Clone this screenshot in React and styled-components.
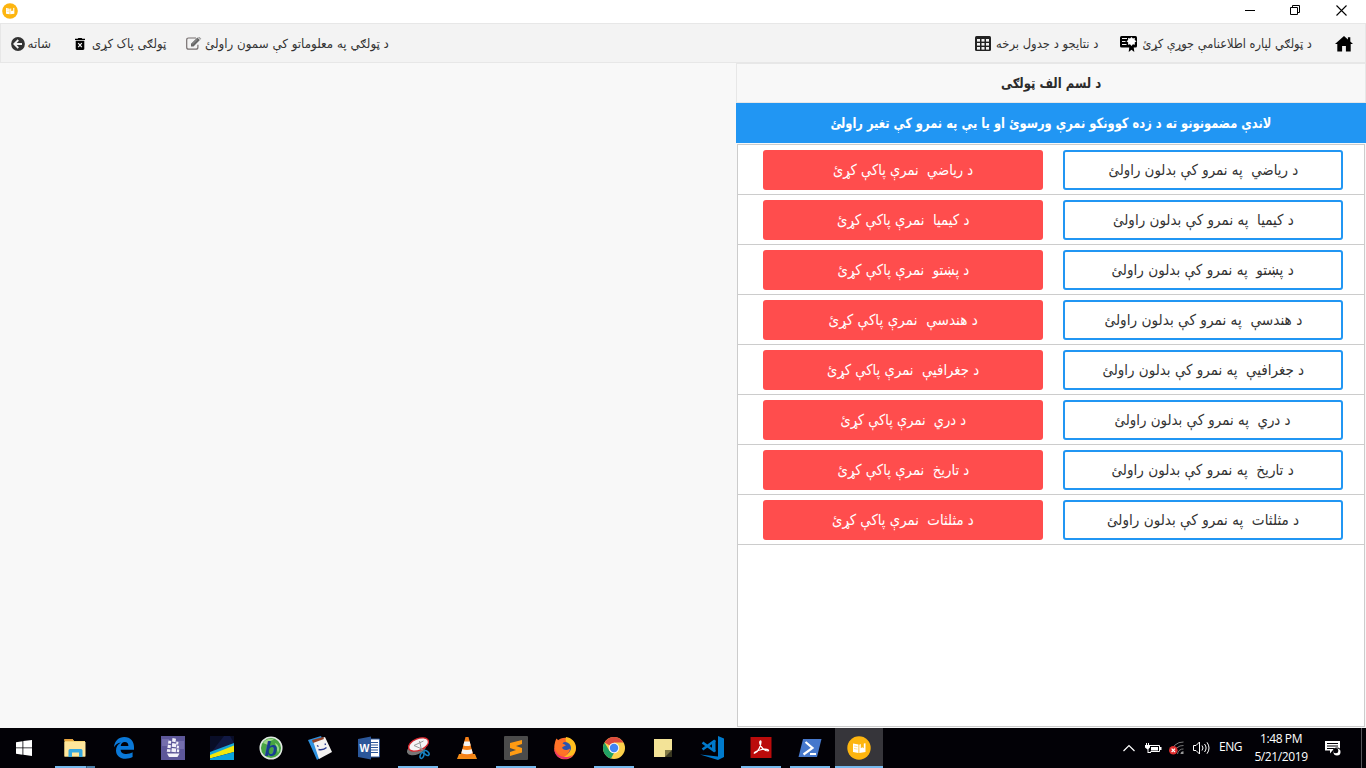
import React from "react";
import styled, { createGlobalStyle, css } from "styled-components";

const GlobalStyle = createGlobalStyle`
  * { box-sizing: border-box; }
  body { margin: 0; background: #f8f8f8; overflow: hidden; }
  button { font: inherit; color: inherit; margin: 0; padding: 0; border: 0; background: none; }
  svg { display: block; flex: none; }
`;

const Window = styled.div`
  width: 1366px;
  height: 768px;
  display: flex;
  flex-direction: column;
  font-family: "DejaVu Sans", "Noto Sans", sans-serif;
  background: #f8f8f8;
`;

const TitleBar = styled.header`
  height: 23px;
  flex: none;
  display: flex;
  align-items: flex-start;
  justify-content: space-between;
  background: #fff;
  padding: 3px 19px 0 2px;
`;

const WindowControls = styled.div`
  display: flex;
  gap: 35px;
  padding-top: 2px;
`;

const Toolbar = styled.nav`
  height: 40px;
  flex: none;
  display: flex;
  justify-content: space-between;
  align-items: center;
  background: #f3f3f3;
  border: 1px solid #e7e7e7;
  padding: 1px 12px 0 10px;
`;

const ToolGroup = styled.div`
  display: flex;
  align-items: center;
`;

const Tool = styled.button`
  display: flex;
  align-items: center;
  gap: ${(p) => p.$gap}px;
  margin-right: ${(p) => p.$after || 0}px;
  color: #333;
`;

const TextBox = styled.span`
  display: flex;
  justify-content: center;
  width: ${(p) => p.$width}px;
  white-space: pre;
  direction: rtl;
  font-size: ${(p) => p.$size || 12.5}px;
  font-weight: ${(p) => (p.$bold ? 700 : 400)};
  line-height: 20px;
`;

const TextRun = styled.span`
  flex: none;
`;

function Text({ width, children, ...rest }) {
  const ref = React.useRef(null);
  React.useLayoutEffect(() => {
    const el = ref.current;
    el.style.transform = `scaleX(${width / el.offsetWidth})`;
  }, [width, children]);
  return (
    <TextBox $width={width} {...rest}>
      <TextRun ref={ref}>{children}</TextRun>
    </TextBox>
  );
}

const Content = styled.main`
  height: 665px;
  flex: none;
  display: flex;
  justify-content: flex-end;
`;

const Panel = styled.section`
  width: 630px;
  display: flex;
  flex-direction: column;
`;

const PanelTitle = styled.h1`
  margin: 0;
  height: 40px;
  flex: none;
  display: flex;
  align-items: center;
  justify-content: center;
  color: #2b2b2b;
  background: #f8f8f8;
  border: 1px solid #e7e7e7;
`;

const PanelNotice = styled.div`
  height: 40px;
  flex: none;
  display: flex;
  align-items: center;
  justify-content: center;
  color: #fff;
  background: #2196f3;
`;

const SubjectList = styled.div`
  flex: 1;
  margin: 1px;
  background: #fff;
  border: 1px solid #ccc;
`;

const SubjectRow = styled.div`
  height: 50px;
  display: flex;
  gap: 20px;
  padding: 5px 21px 0 25px;
  border-bottom: 1px solid #ccc;
`;

const ActionButton = styled.button`
  && {
    width: 280px;
    height: 40px;
    display: flex;
    align-items: center;
    justify-content: center;
    border-radius: 3px;
    ${(p) =>
      p.$danger
        ? css`
            background: #ff4d4d;
            color: #fff;
          `
        : css`
            background: #fff;
            color: #333;
            border: 2px solid #2196f3;
          `}
  }
`;

const Taskbar = styled.footer`
  height: 40px;
  flex: none;
  display: flex;
  justify-content: space-between;
  background: #020106;
  color: #fff;
  font-family: "Open Sans", "Noto Sans", sans-serif;
`;

const AppStrip = styled.div`
  display: flex;
  gap: 1px;
`;

const AppButton = styled.button`
  && {
    width: 48px;
    height: 40px;
    display: flex;
    flex-direction: column;
    align-items: center;
    justify-content: space-between;
    padding-top: 8px;
    margin-right: ${(p) => (p.$start ? 2 : 0)}px;
    background: ${(p) => (p.$active ? "#36353a" : "transparent")};
  }
`;

const RunningBar = styled.i`
  width: ${(p) => (p.$wide ? 48 : 40)}px;
  height: 2px;
  background: ${(p) =>
    p.$stacked ? "linear-gradient(90deg, #76b9ed 31px, #24384a 31px, #4b7fa8 32px)" : "#76b9ed"};
`;

const Tray = styled.div`
  display: flex;
  align-items: center;
  height: 40px;
`;

const TrayItem = styled.div`
  margin-right: ${(p) => p.$after}px;
  padding-bottom: ${(p) => p.$lift || 0}px;
`;

const Clock = styled.div`
  width: 56px;
  display: flex;
  flex-direction: column;
  align-items: center;
  margin-right: 16px;
  padding-bottom: 1px;
`;

const Latin = styled.span`
  display: block;
  font-size: 12px;
  line-height: 18px;
  letter-spacing: ${(p) => p.$track || 0}px;
`;

const DesktopEdge = styled.i`
  width: 1px;
  height: 40px;
  background: #55555a;
  margin-right: 4px;
`;

const AppLogo = ({ size }) => (
  <svg width={size} height={size} viewBox="0 0 24 24">
    <circle cx="12" cy="12" r="11.7" fill="#fdb50f" />
    <path d="M6 7.5l5.500 1v8.500L6 16zM12.300 8.800l1.500-.8v4.200l1.500-1 1.500 1V7.500l1.700-.2V16l-6.200 1z" fill="#fff" />
    <path d="M7 10l3.500.6M7 12.500l3.500.6" stroke="#fdd477" strokeWidth=".8" />
  </svg>
);

const HomeIcon = () => (
  <svg width="18" height="16" viewBox="0 0 18 16">
    <path d="M9 0L0 8h2.300v7.500h4.800V10h3.800v5.500h4.800V8H18l-2.700-2.400V1.300h-2.400v2.200z" fill="#000" />
  </svg>
);

const BackIcon = () => (
  <svg width="14" height="14" viewBox="0 0 14 14">
    <circle cx="7" cy="7" r="6.900" fill="#333" />
    <path d="M7.300 3L3.300 7l4 4M3.700 7H11" fill="none" stroke="#f3f3f3" strokeWidth="1.800" />
  </svg>
);

const TrashIcon = () => (
  <svg width="10" height="12" viewBox="0 0 10 12">
    <path d="M0 .7h2.700L3.300 0h3.400l.6.7H10V2H0zM.7 2.800h8.600v8c0 .7-.5 1.200-1.200 1.200H1.900C1.200 12 .7 11.500.7 10.800z" fill="#000" />
    <path d="M3.200 5.200l3.600 3.900M6.800 5.200L3.200 9.100" stroke="#f3f3f3" strokeWidth="1.200" />
  </svg>
);

const EditIcon = () => (
  <svg width="16" height="13" viewBox="0 0 16 13" fill="none">
    <path d="M10 1H2.600Q.7 1 .7 3v7.200q0 2 1.900 2h7.300q2 0 2-2V7.800" stroke="#777070" strokeWidth="1.200" />
    <path d="M5 6.800L11.400.6l2.500 2.500L7.500 9.400H5z" fill="#666" />
    <path d="M12.200 0l.7-.3 1.900 1.900-.4.800zM6.400 7l5-4.800" fill="#666" stroke="#bbb" strokeWidth=".6" />
  </svg>
);

const TableIcon = () => (
  <svg width="16" height="15" viewBox="0 0 16 15">
    <rect width="16" height="15" rx="1.500" fill="#222" />
    <g fill="#f3f3f3">
      {[3, 7, 11].map((y) =>
        [2, 6.500, 11].map((x) => <rect key={`${x}-${y}`} x={x} y={y} width="3" height="2.600" />)
      )}
    </g>
  </svg>
);

const CertificateIcon = () => (
  <svg width="18" height="16" viewBox="0 0 18 16">
    <path d="M1.500 0h14Q17 0 17 1.500V10q0 1.500-1.500 1.500h-14Q0 11.500 0 10V1.500Q0 0 1.500 0z" fill="#000" />
    <path d="M2 2.500h5M2 5.500h3.500M2 8.500h4.500" stroke="#f3f3f3" strokeWidth="1.100" />
    <path d="M11.500 1l1.400 1.600 2-.6-.2 2 1.800 1.300-1.800 1.300.2 2.100-2-.5L11.500 10 10 8.200l-2 .5.200-2.100-1.700-1.300L8.200 4 8 2l2 .6z" fill="#fff" />
    <path d="M9.500 9.500l2 1 2-1 .8 6.500-2.800-2.300L8.700 16z" fill="#000" />
  </svg>
);

const MinimizeIcon = () => (
  <svg width="10" height="12" viewBox="0 0 10 12">
    <path d="M0 5.500h10" stroke="#000" />
  </svg>
);
const RestoreIcon = () => (
  <svg width="11" height="11" viewBox="0 0 11 11" fill="none" stroke="#000">
    <path d="M.5 2.500h7v7h-7zM2.500 2.500v-2h7v7h-2" />
  </svg>
);
const CloseIcon = () => (
  <svg width="11" height="11" viewBox="0 0 11 11">
    <path d="M.5.5l10 10M10.500.5l-10 10" stroke="#000" strokeWidth="1.100" />
  </svg>
);

const Glyph = ({ children }) => (
  <svg width="24" height="24" viewBox="0 0 24 24" fill="none">
    {children}
  </svg>
);

const StartGlyph = () => (
  <Glyph>
    <path d="M4 6.200l6.500-1v6.300H4zM11.300 5.100L20 4v7.500h-8.700zM4 12.300h6.500v6.400l-6.500-1zM11.300 12.300H20V20l-8.700-1.200z" fill="#fff" />
  </Glyph>
);
const ExplorerGlyph = () => (
  <Glyph>
    <path d="M1.500 3h8l1.500 2h11v15.500H1.500z" fill="#f8d775" />
    <path d="M1.500 3h8l1.300 2H1.500z" fill="#e8a33d" />
    <path d="M1.500 6h21v14.500h-21z" fill="#ffe69b" />
    <path d="M5.500 21v-6.500q0-1.500 1.500-1.500h11q1.500 0 1.500 1.500V21H16v-4.500H9V21z" fill="#35a8e0" />
  </Glyph>
);
const EdgeGlyph = () => (
  <Glyph>
    <path d="M2 11.300C2.500 5 6.700 1 12.300 1 18.700 1 22 5.600 22 11v2.700H8.600c.2 3 2.700 4.300 5.700 4.300 2.200 0 4.400-.6 6.300-1.700v4.800c-2.100 1.100-4.500 1.600-7 1.600C8 22.700 4 19.400 4 14.400c0-3.400 1.800-6.300 4.900-8-3 .4-5.400 2-6.900 4.900zM8.700 10h7.700c0-2.700-1.200-4-3.600-4-2.200 0-3.700 1.500-4.100 4z" fill="#0a78d7" />
  </Glyph>
);
const ShipGlyph = () => (
  <Glyph>
    <path d="M0 0h24v24H0z" fill="#5d5799" />
    <path d="M1 3h7v7H1zM15 5h8v8h-8z" fill="#746eac" />
    <g fill="#f3f2fa">
      <path d="M11.500 2l3.500.8-.5 3.400-3.500-.6zM7.500 4.500l2.800.6-.4 2.700-2.900-.4zM15.500 5.500l2 .5-.4 2.500-2-.3zM11.300 7l4 .7-.4 3.500-4.200-.5zM7 8.800l3 .4-.4 3-3.300-.4zM16 9.500l2 .4-.3 2.600-2-.2zM10.800 12l4.400.5-.4 3.700-4.500-.4zM6.300 13l3.300.4-.3 2.700-3.600-.3zM16 13.300l2.300.2-.3 2.700-2.300-.2z" />
      <path d="M6 17.500h12.500L16.500 21H8z" />
    </g>
  </Glyph>
);
const StripeGlyph = () => (
  <Glyph>
    <path d="M0 0h24v24H0z" fill="#090d27" />
    <path d="M14 0h6l4 7v2L0 18z" fill="#111944" />
    <path d="M0 16L24 7v6.500L0 20z" fill="#16a5d8" />
    <path d="M0 19L24 9.500V16L0 22.500z" fill="#f1e80c" />
    <path d="M0 22.500L24 16v8H0z" fill="#0ba3dc" />
  </Glyph>
);
const BabylonGlyph = () => (
  <Glyph>
    <circle cx="12" cy="12" r="10.800" fill="#48a544" stroke="#e1e9e2" strokeWidth="1.500" />
    <path d="M4 7c3-5 9-5 11-3-3 0-5 2-6 5zM16 7c4 2 5 6 3 10z" fill="#9cd989" />
    <text x="5.500" y="19.500" fill="#173d94" fontFamily="Liberation Sans, sans-serif" fontSize="21" fontWeight="700" fontStyle="italic">b</text>
  </Glyph>
);
const NotesGlyph = () => (
  <Glyph>
    <path d="M0 4l13-4 7 16-11 8z" fill="#2e91df" />
    <path d="M5 5l12-4 7 15-13 7z" fill="#f3f2f2" />
    <path d="M4 4l11-3 1 2L5 7z" fill="#8e4027" />
    <path d="M9 9.500l1.500 1M17 7.500l.5 1.500M10.500 13.500q5 1 8-2" stroke="#263790" strokeWidth="1.300" />
  </Glyph>
);
const WordGlyph = () => (
  <Glyph>
    <path d="M11 3h11.500v18H11z" fill="#fff" stroke="#2b579a" />
    <path d="M14 6.500h7M14 9h7M14 11.500h7M14 14h7M14 16.500h7" stroke="#2b579a" />
    <path d="M1 3l13-2.500v23L1 21z" fill="#2b579a" />
    <text x="2.500" y="16" fill="#fff" fontFamily="Liberation Sans, sans-serif" fontSize="10.500" fontWeight="700">W</text>
  </Glyph>
);
const SnipGlyph = () => (
  <Glyph>
    <ellipse cx="10.500" cy="13" rx="10" ry="5.500" transform="rotate(-22 10.500 13)" fill="#777" />
    <ellipse cx="12.500" cy="8.500" rx="10.500" ry="5.800" transform="rotate(-22 12.500 8.500)" fill="#f5f5f5" stroke="#d7252c" strokeWidth="1.300" />
    <path d="M17.500 5L8 9.500l9 4M13.500 5l2 9" stroke="#999" />
    <ellipse cx="16" cy="19.500" rx="1.800" ry="3" transform="rotate(20 16 19.500)" stroke="#1683c5" strokeWidth="1.500" />
    <ellipse cx="20.500" cy="17" rx="1.800" ry="3" transform="rotate(-50 20.500 17)" stroke="#1683c5" strokeWidth="1.500" />
  </Glyph>
);
const VlcGlyph = () => (
  <Glyph>
    <path d="M4 18h16l2 5H2z" fill="#f48b16" />
    <path d="M10.500 1h3l5 19q-6.500 3-13 0z" fill="#f57f17" />
    <path d="M9.300 5.500h5.400l1 4q-3.700 1.200-7.400 0zM7.300 13.200q4.700 1.600 9.400 0l1 4q-5.700 2-11.400 0z" fill="#f4f4f4" />
  </Glyph>
);
const SublimeGlyph = () => (
  <Glyph>
    <rect width="24" height="24" rx="1" fill="#4b4b4b" />
    <path d="M6 7l12-3v4l-6 2 6 2v4.500L6 20v-4l6-2-6-2z" fill="#ff9b13" />
  </Glyph>
);
const FirefoxGlyph = () => (
  <Glyph>
    <circle cx="12" cy="12.500" r="10.800" fill="#ff6a2a" />
    <path d="M13 1c8 1 12 9 9 15-3 6-10 8-15 6 9-2 12-8 8-14-2-2-3-4-2-7z" fill="#ffbf1f" />
    <circle cx="12" cy="12" r="6" fill="#2a53b0" />
    <path d="M1.500 9C2 6 2.500 4 3.500 2.500L6 5c2-1 4-.7 5.500 0L9.500 7.500l3.500 1.800-3.800 1.900c0 3 4.800 3.800 7.800 1.300 0 4-3 6.500-7 6-5-.6-7.500-4-8.500-9.500z" fill="#ff7328" />
    <path d="M1.300 12c1 5 5 9 11 9 3 0 5-.6 7-2-2.500 3.500-6 4.500-9 4-5.500-.8-9-5-9-11z" fill="#ea3070" />
  </Glyph>
);
const ChromeGlyph = () => (
  <Glyph>
    <circle cx="12" cy="12" r="11" fill="#fcd04b" />
    <path d="M12 12L2.500 6.500A11 11 0 0 1 21.500 6.500H12z" fill="#dd4b3e" />
    <path d="M2.500 6.500L7.500 15l4.500 2-3 5.600A11 11 0 0 1 2.500 6.500z" fill="#21a164" />
    <circle cx="12" cy="12" r="5.300" fill="#f5f5f5" />
    <circle cx="12" cy="12" r="4.200" fill="#4285f4" />
  </Glyph>
);
const StickyGlyph = () => (
  <Glyph>
    <path d="M3 3h18v11l-7 7H3z" fill="#f3e397" />
    <path d="M14 14h7l-7 7z" fill="#807844" />
    <path d="M21 14v7h-7z" fill="#393721" />
  </Glyph>
);
const CodeGlyph = () => (
  <Glyph>
    <path d="M18 0l6 2.500V21l-6 3L0 18.500l18 2z" fill="#007acc" />
    <path d="M2.500 6.500L15 15.500M2.500 13.500L15 4.500" stroke="#007acc" strokeWidth="2.600" />
    <path d="M12 5.500l3.500-1.500v12L12 14z" fill="#007acc" />
  </Glyph>
);
const AcrobatGlyph = () => (
  <Glyph>
    <path d="M1.500 1h21v21h-21z" fill="#bb0b0b" />
    <path d="M6 17c3-1 6-7 6-11 0-2-2-1-1 2 1 4 5 7 8 7 2-1-2-3-8-1-5 1-7 4-5 3z" stroke="#fff" strokeWidth="1.200" />
  </Glyph>
);
const PowerShellGlyph = () => (
  <Glyph>
    <path d="M5 3h18.500L19 21H.5z" fill="#4678cc" />
    <path d="M7.500 6l7 6-9 6.500M12 18h6" stroke="#fff" strokeWidth="2.200" />
  </Glyph>
);

const ChevronIcon = () => (
  <svg width="12" height="8" viewBox="0 0 12 8" fill="none">
    <path d="M.5 7L6 1.500 11.500 7" stroke="#fff" strokeWidth="1.200" />
  </svg>
);
const BatteryIcon = () => (
  <svg width="17" height="12" viewBox="0 0 17 12" fill="none">
    <path d="M4 3.500h10.500v6h-9" stroke="#fff" />
    <path d="M6 5h7v3.500H6zM15 5h1.500v3H15zM0 3h5v2.500L3.500 7v3H6v1H2.500V7.500L0 5.500zM1 1h1v2H1zM3 1h1v2H3z" fill="#fff" />
  </svg>
);
const WifiIcon = () => (
  <svg width="16" height="14" viewBox="0 0 16 14" fill="none">
    <path d="M2 12A12 12 0 0 1 14.500 1M5 13A9 9 0 0 1 14.500 4.500M8.500 13a5.500 5.500 0 0 1 6-5" stroke="#777" />
    <path d="M11.500 13q0-2.500 3-2.800V13z" fill="#999" />
    <circle cx="4.300" cy="9.300" r="4.300" fill="#e02f2f" />
    <path d="M2.600 7.600L6 11M6 7.600L2.600 11" stroke="#fff" strokeWidth="1.200" />
  </svg>
);
const SpeakerIcon = () => (
  <svg width="17" height="14" viewBox="0 0 17 14" fill="none" stroke="#fff">
    <path d="M.5 4.500H3L6.500 1v12L3 9.500H.5zM9 4.500q2 2.500 0 5M11.500 3q3.200 4 0 8M14 1.300q4 5.700 0 11.400" />
  </svg>
);
const ActionCenterIcon = () => (
  <svg width="17" height="17" viewBox="0 0 17 17" fill="none">
    <path d="M0 1h15v9.500H7.500L5 13.500v-3H0z" fill="#fff" />
    <path d="M2 3.500h11M2 6h11M2 8.500h7" stroke="#020106" />
    <circle cx="12" cy="12" r="4.500" fill="#020106" />
    <circle cx="12" cy="12" r="3.500" fill="#fff" />
    <circle cx="10.800" cy="10.700" r="2.500" fill="#020106" />
  </svg>
);

const subjects = [
  { name: "ریاضي", edit: 190, clear: 140 },
  { name: "کیمیا", edit: 181, clear: 132 },
  { name: "پښتو", edit: 182, clear: 132 },
  { name: "هندسې", edit: 198, clear: 149 },
  { name: "جغرافیې", edit: 202, clear: 152 },
  { name: "دري", edit: 176, clear: 126 },
  { name: "تاریخ", edit: 182, clear: 132 },
  { name: "مثلثات", edit: 192, clear: 142 },
];

const apps = [
  { id: "start", Icon: StartGlyph, start: true },
  { id: "explorer", Icon: ExplorerGlyph, running: true, stacked: true },
  { id: "edge", Icon: EdgeGlyph },
  { id: "ship", Icon: ShipGlyph },
  { id: "stripe", Icon: StripeGlyph },
  { id: "babylon", Icon: BabylonGlyph },
  { id: "notes", Icon: NotesGlyph },
  { id: "word", Icon: WordGlyph },
  { id: "snip", Icon: SnipGlyph, running: true },
  { id: "vlc", Icon: VlcGlyph },
  { id: "sublime", Icon: SublimeGlyph, running: true },
  { id: "firefox", Icon: FirefoxGlyph },
  { id: "chrome", Icon: ChromeGlyph, running: true },
  { id: "sticky", Icon: StickyGlyph },
  { id: "code", Icon: CodeGlyph },
  { id: "acrobat", Icon: AcrobatGlyph, running: true },
  { id: "powershell", Icon: PowerShellGlyph, running: true },
  { id: "school", Icon: () => <AppLogo size={24} />, running: true, active: true },
];

export default function App() {
  return (
    <Window>
      <GlobalStyle />
      <TitleBar>
        <AppLogo size={16} />
        <WindowControls>
          <MinimizeIcon />
          <RestoreIcon />
          <CloseIcon />
        </WindowControls>
      </TitleBar>

      <Toolbar>
        <ToolGroup>
          <Tool $gap={3} $after={24}>
            <BackIcon />
            <Text width={23}>شاته</Text>
          </Tool>
          <Tool $gap={7} $after={20}>
            <TrashIcon />
            <Text width={74}>ټولګی پاک کړی</Text>
          </Tool>
          <Tool $gap={3}>
            <EditIcon />
            <Text width={184}>د ټولګي په معلوماتو کې سمون راولئ</Text>
          </Tool>
        </ToolGroup>
        <ToolGroup>
          <Tool $gap={5} $after={22}>
            <TableIcon />
            <Text width={102}>د نتایجو د جدول برخه</Text>
          </Tool>
          <Tool $gap={5} $after={23}>
            <CertificateIcon />
            <Text width={169}>د ټولګي لپاره اطلاعنامې جوړې کړئ</Text>
          </Tool>
          <HomeIcon />
        </ToolGroup>
      </Toolbar>

      <Content>
        <Panel>
          <PanelTitle>
            <Text width={100} $size={14} $bold>د لسم الف ټولګی</Text>
          </PanelTitle>
          <PanelNotice>
            <Text width={441} $size={14} $bold>
              لاندې مضمونونو ته د زده کوونکو نمرې ورسوئ او یا یې په نمرو کې تغیر راولئ
            </Text>
          </PanelNotice>
          <SubjectList>
            {subjects.map((s) => (
              <SubjectRow key={s.name}>
                <ActionButton $danger>
                  <Text width={s.clear} $size={15}>{`د ${s.name}  نمرې پاکې کړئ`}</Text>
                </ActionButton>
                <ActionButton>
                  <Text width={s.edit} $size={15}>{`د ${s.name}  په نمرو کې بدلون راولئ`}</Text>
                </ActionButton>
              </SubjectRow>
            ))}
          </SubjectList>
        </Panel>
      </Content>

      <Taskbar>
        <AppStrip>
          {apps.map(({ id, Icon, start, running, stacked, active }) => (
            <AppButton key={id} $start={start} $active={active}>
              <Icon />
              {running && <RunningBar $wide={active} $stacked={stacked} />}
            </AppButton>
          ))}
        </AppStrip>
        <Tray>
          <TrayItem $after={10}><ChevronIcon /></TrayItem>
          <TrayItem $after={7}><BatteryIcon /></TrayItem>
          <TrayItem $after={8}><WifiIcon /></TrayItem>
          <TrayItem $after={9}><SpeakerIcon /></TrayItem>
          <TrayItem $after={11} $lift={2}><Latin $track={-0.5}>ENG</Latin></TrayItem>
          <Clock>
            <Latin $track={-0.4}>1:48 PM</Latin>
            <Latin $track={-0.4}>5/21/2019</Latin>
          </Clock>
          <TrayItem $after={19}><ActionCenterIcon /></TrayItem>
          <DesktopEdge />
        </Tray>
      </Taskbar>
    </Window>
  );
}
